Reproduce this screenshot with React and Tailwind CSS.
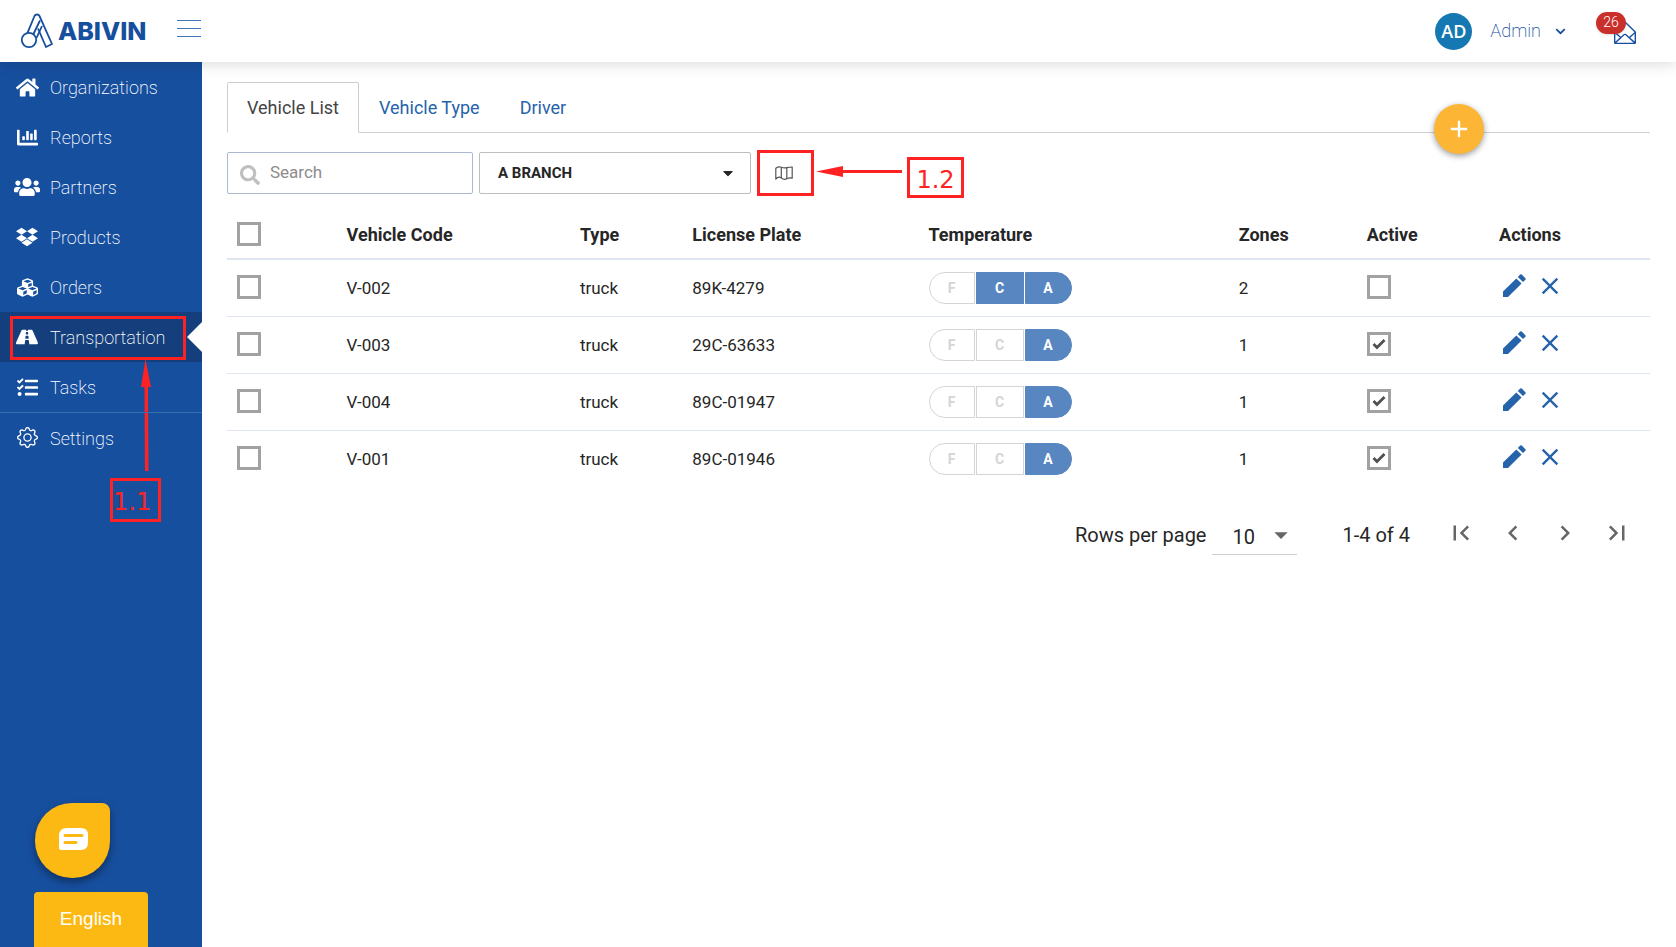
import React, { useState } from 'react';
import {
  FaHome,
  FaChartBar,
  FaUsers,
  FaDropbox,
  FaCubes,
  FaRoad,
  FaTasks,
  FaSearch,
  FaCaretDown,
  FaChevronDown
} from 'react-icons/fa';
import { MdAdd, MdClose, MdFirstPage, MdLastPage, MdChevronLeft, MdChevronRight, MdArrowDropDown } from 'react-icons/md';
import { SlEnvelopeOpen } from 'react-icons/sl';
import { BsGear } from 'react-icons/bs';

const menuItems = [
  { id: 'organizations', label: 'Organizations', icon: FaHome, size: 'h-[23px] w-[23px]' },
  { id: 'reports', label: 'Reports', icon: FaChartBar, size: 'h-[21px] w-[21px]' },
  { id: 'partners', label: 'Partners', icon: FaUsers, size: 'h-[26px] w-[26px]' },
  { id: 'products', label: 'Products', icon: FaDropbox, size: 'h-[22px] w-[22px]' },
  { id: 'orders', label: 'Orders', icon: FaCubes, size: 'h-[21px] w-[21px]' },
  { id: 'transportation', label: 'Transportation', icon: FaRoad, size: 'h-[22px] w-[22px]', callout: true },
  { id: 'tasks', label: 'Tasks', icon: FaTasks, size: 'h-[21px] w-[21px]' },
  { id: 'settings', label: 'Settings', icon: BsGear, size: 'h-[21px] w-[21px]', divider: true }
];

const tabs = ['Vehicle List', 'Vehicle Type', 'Driver'];

const initialVehicles = [
  { code: 'V-002', type: 'truck', plate: '89K-4279', temps: ['C', 'A'], zones: 2, active: false },
  { code: 'V-003', type: 'truck', plate: '29C-63633', temps: ['A'], zones: 1, active: true },
  { code: 'V-004', type: 'truck', plate: '89C-01947', temps: ['A'], zones: 1, active: true },
  { code: 'V-001', type: 'truck', plate: '89C-01946', temps: ['A'], zones: 1, active: true }
];

const Logo = () => (
  <a href="#home" className="flex items-center gap-1 text-[#174f9f]">
    <svg width="34" height="36" viewBox="0 0 34 36" fill="none" stroke="currentColor" strokeWidth="1.8" strokeLinejoin="round">
      <circle cx="9" cy="27" r="7.200" />
      <path d="M7.500 19.800L14.500 3Q15.200 1.500 17 1.500Q18.800 1.500 19.500 3L32 31L26 34L18 15.500" />
      <path d="M13.500 21L20 7.500M22 13L16.500 25" />
    </svg>
    <span className="font-['Inter',sans-serif] text-[25px] leading-none font-extrabold">ABIVIN</span>
  </a>
);

const PencilIcon = () => (
  <svg width="23" height="23" viewBox="0 0 23 23" fill="currentColor">
    <path d="M0 17.600L13.300 4.500L18.600 9.400L5 23H0Z" />
    <path d="M14.800 3L17.200 .6Q18 0 18.800 .6L22.400 4.200Q23 5 22.400 5.800L20 8.100Z" />
  </svg>
);

const MapIcon = () => (
  <svg width="18" height="14" viewBox="0 0 18 14" fill="none" stroke="currentColor" strokeWidth="1.200" strokeLinejoin="round">
    <path d="M.8 2.200Q3.500 .2 6.300 1.200T11.800 1.600T17.200 1V12.200Q14.500 11.400 11.800 12.800T6.300 12T.8 13Z" />
    <path d="M6.300 1.200V12M11.800 1.600V12.800" />
  </svg>
);

const Checkbox = ({ label, checked, onChange }) => (
  <label className="relative block h-6 w-6">
    <input
      type="checkbox"
      aria-label={label}
      checked={checked}
      onChange={onChange}
      className="peer block h-6 w-6 appearance-none border-3 border-[#a2a2a2] bg-white"
    />
    <svg
      viewBox="0 0 14 12"
      fill="none"
      stroke="#505050"
      strokeWidth="2.800"
      className="pointer-events-none absolute inset-0 m-auto hidden h-3 w-3.5 peer-checked:block"
    >
      <path d="M1.500 6L5 9.500L12.500 2" />
    </svg>
  </label>
);

const TemperatureGroup = ({ temps }) => (
  <div className="flex gap-px">
    {['F', 'C', 'A'].map((temp) => (
      <button
        key={temp}
        type="button"
        className={`h-8 w-12 border text-sm font-bold first:w-[46px] first:rounded-l-full last:w-[47px] last:rounded-r-full ${
          temps.includes(temp)
            ? 'border-[#5886c0] bg-[#5886c0] text-white'
            : 'border-[#d5d5d5] bg-white text-[#d5d5d5]'
        }`}
      >
        {temp}
      </button>
    ))}
  </div>
);

const Header = () => (
  <header className="relative z-10 flex h-[62px] shrink-0 items-center bg-white pr-10 pl-5 shadow-[0_2px_14px_rgba(0,0,0,0.15)]">
    <Logo />
    <button type="button" aria-label="Toggle menu" className="mb-1.5 ml-[30px] flex w-6 flex-col gap-[7px]">
      <span className="h-px w-full bg-[#3f74b8]" />
      <span className="h-px w-full bg-[#3f74b8]" />
      <span className="h-px w-full bg-[#3f74b8]" />
    </button>
    <div className="ml-auto flex items-center">
      <span className="flex h-[37px] w-[37px] items-center justify-center rounded-full bg-[#1578b2] font-['Open_Sans',sans-serif] text-lg font-semibold text-white">
        AD
      </span>
      <button type="button" className="ml-[18px] flex items-center gap-3.5 text-lg font-extralight text-[#174f9f]">
        Admin
        <FaChevronDown className="h-[11px] w-[11px]" />
      </button>
      <button type="button" aria-label="Messages" className="relative ml-12 pt-1 text-[#174f9f]">
        <SlEnvelopeOpen className="h-[22px] w-[22px]" />
        <span className="absolute -top-1.5 -left-[18px] flex h-[22px] w-[30px] items-center justify-center rounded-full bg-[#c9302c] pb-0.5 text-sm font-light text-white shadow">
          26
        </span>
      </button>
    </div>
  </header>
);

const Sidebar = () => (
  <aside className="relative flex w-[202px] shrink-0 flex-col bg-[#174f9f]">
    <nav>
      {menuItems.map((item) => (
        <a
          key={item.id}
          href={`#${item.id}`}
          className={`relative flex h-[50px] items-center gap-2.5 pl-3.5 text-lg font-extralight text-white ${
            item.callout ? 'bg-[#143f7c]' : ''
          } ${item.divider ? 'border-t border-[#3a6db0]' : ''}`}
        >
          <span className="flex w-[26px] justify-center">
            <item.icon className={item.size} />
          </span>
          <span className="pt-0.5">{item.label}</span>
          {item.callout && (
            <>
              <span className="absolute top-2.5 right-0 h-0 w-0 border-y-15 border-r-15 border-y-transparent border-r-white" />
              <span className="absolute top-1 right-4 left-2.5 h-11 border-3 border-[#ff2222]" />
              <svg className="absolute top-[47px] left-[140px]" width="12" height="114" viewBox="0 0 12 114" fill="#ff2222">
                <path d="M5.500 0L11 28H8L8.500 112H5L4.500 28H1Z" />
              </svg>
              <span className="absolute top-[166px] left-[110px] flex h-11 w-[51px] items-center border-3 border-[#ff2222] pt-1 font-['DejaVu_Sans',sans-serif] text-2xl font-normal text-[#ff2222]">
                1.1
              </span>
            </>
          )}
        </a>
      ))}
    </nav>
    <div className="mt-auto flex flex-col items-start gap-3.5 pl-[34px]">
      <button
        type="button"
        aria-label="Open chat"
        className="ml-px flex h-[75px] w-[75px] items-center justify-center rounded-[37px] rounded-tr-lg bg-[#fdb913] pb-1 pl-0.5 shadow-[0_4px_8px_rgba(0,0,0,0.4)]"
      >
        <svg width="30" height="22" viewBox="0 0 30 22">
          <path fill="#fff" d="M8 0H22Q29 0 29 7V14Q29 22 22 22H2Q0 22 0 20V8Q0 0 8 0Z" />
          <path stroke="#fdb913" strokeWidth="3" strokeLinecap="round" d="M6 7.500H23M6 14.500H17" />
        </svg>
      </button>
      <button type="button" className="h-[55px] w-[114px] rounded-t bg-[#fdb913] font-['Liberation_Sans',sans-serif] text-[19px] text-white">
        English
      </button>
    </div>
  </aside>
);

const Toolbar = () => (
  <div className="mt-[19px] flex items-center gap-1.5">
    <label className="flex h-[42px] w-[246px] items-center gap-2.5 rounded-xs border border-[#acb7d0] pl-3">
      <FaSearch className="mt-1 h-5 w-5 shrink-0 text-[#bfbfbf]" />
      <input
        type="text"
        aria-label="Search"
        placeholder="Search"
        className="w-full bg-transparent text-[17px] outline-none placeholder:text-[#8c8c8c]"
      />
    </label>
    <div className="relative">
      <select
        aria-label="Branch"
        className="h-[42px] w-[272px] appearance-none rounded-xs border border-[#bdbdbd] bg-white pl-[18px] text-[15px] font-bold"
      >
        <option>A BRANCH</option>
      </select>
      <FaCaretDown className="pointer-events-none absolute top-[13px] right-[15px] h-4 w-4" />
    </div>
    <div className="relative">
      <button
        type="button"
        aria-label="Show map"
        className="-my-1 flex h-[46px] w-[57px] items-center justify-center border-3 border-[#ff2222] pr-1 text-[#555]"
      >
        <MapIcon />
      </button>
      <svg className="absolute top-3 left-[59px]" width="87" height="12" viewBox="0 0 87 12" fill="#ff2222">
        <path d="M0 5.500L27 0V4H86V7H27V11Z" />
      </svg>
      <span className="absolute top-[3px] left-[150px] flex h-[41px] w-[57px] items-center justify-center border-3 border-[#ff2222] pt-1 font-['DejaVu_Sans',sans-serif] text-2xl text-[#ff2222]">
        1.2
      </span>
    </div>
  </div>
);

const VehicleTable = () => {
  const [vehicles, setVehicles] = useState(initialVehicles);
  const [selected, setSelected] = useState([]);

  const toggleSelected = (code) => {
    setSelected(selected.includes(code) ? selected.filter((c) => c !== code) : [...selected, code]);
  };

  const toggleAll = () => {
    setSelected(selected.length === vehicles.length ? [] : vehicles.map((v) => v.code));
  };

  const toggleActive = (code) => {
    setVehicles(vehicles.map((v) => (v.code === code ? { ...v, active: !v.active } : v)));
  };

  return (
    <table className="mt-4 w-full table-fixed text-left text-[17px]">
      <colgroup>
        <col className="w-[8.4%]" />
        <col className="w-[16.4%]" />
        <col className="w-[7.9%]" />
        <col className="w-[16.6%]" />
        <col className="w-[21.8%]" />
        <col className="w-[9%]" />
        <col className="w-[9.3%]" />
        <col />
      </colgroup>
      <thead>
        <tr className="h-[49px] border-b-2 border-[#dfe5ef] text-lg">
          <th className="pl-2.5">
            <Checkbox label="Select all" checked={selected.length === vehicles.length} onChange={toggleAll} />
          </th>
          <th className="pt-0.5">Vehicle Code</th>
          <th className="pt-0.5">Type</th>
          <th className="pt-0.5">License Plate</th>
          <th className="pt-0.5">Temperature</th>
          <th className="pt-0.5">Zones</th>
          <th className="pt-0.5">Active</th>
          <th className="pt-0.5">Actions</th>
        </tr>
      </thead>
      <tbody>
        {vehicles.map((vehicle) => (
          <tr key={vehicle.code} className="h-[57px] border-b border-[#dfe5ef] last:border-0">
            <td className="pb-0.5 pl-2.5">
              <Checkbox
                label={`Select ${vehicle.code}`}
                checked={selected.includes(vehicle.code)}
                onChange={() => toggleSelected(vehicle.code)}
              />
            </td>
            <td className="pt-0.5">{vehicle.code}</td>
            <td className="pt-0.5">{vehicle.type}</td>
            <td className="pt-0.5">{vehicle.plate}</td>
            <td>
              <TemperatureGroup temps={vehicle.temps} />
            </td>
            <td className="pt-0.5">{vehicle.zones}</td>
            <td className="pb-0.5">
              <Checkbox
                label={`${vehicle.code} active`}
                checked={vehicle.active}
                onChange={() => toggleActive(vehicle.code)}
              />
            </td>
            <td>
              <div className="flex items-center gap-2.5 pb-1 pl-1 text-[#2563ab]">
                <button type="button" aria-label={`Edit ${vehicle.code}`}>
                  <PencilIcon />
                </button>
                <button type="button" aria-label={`Delete ${vehicle.code}`}>
                  <MdClose className="h-7 w-7" />
                </button>
              </div>
            </td>
          </tr>
        ))}
      </tbody>
    </table>
  );
};

const Pagination = () => (
  <div className="mt-7 flex items-center justify-end pr-[18px] text-[20px]">
    <label htmlFor="rows-per-page">Rows per page</label>
    <div className="relative ml-1.5">
      <select
        id="rows-per-page"
        className="block h-10 w-[85px] appearance-none border-b border-[#d0d0d0] bg-transparent pt-1 pl-5"
      >
        <option>10</option>
      </select>
      <MdArrowDropDown className="pointer-events-none absolute top-1 right-0 h-8 w-8 text-[#666]" />
    </div>
    <span className="ml-[45px]">1-4 of 4</span>
    <div className="ml-9 flex gap-[22px] pb-1 text-[#666]">
      <button type="button" aria-label="First page"><MdFirstPage className="h-[30px] w-[30px]" /></button>
      <button type="button" aria-label="Previous page"><MdChevronLeft className="h-[30px] w-[30px]" /></button>
      <button type="button" aria-label="Next page"><MdChevronRight className="h-[30px] w-[30px]" /></button>
      <button type="button" aria-label="Last page"><MdLastPage className="h-[30px] w-[30px]" /></button>
    </div>
  </div>
);

const App = () => {
  const [activeTab, setActiveTab] = useState('Vehicle List');

  return (
    <div className="flex min-h-screen flex-col bg-white font-['Roboto',sans-serif] text-[#262626]">
      <Header />
      <div className="flex flex-1">
        <Sidebar />
        <main className="min-w-0 flex-1 pt-5 pr-[26px] pl-[25px]">
          <div className="relative flex h-[51px] border-b border-[#cfcfcf] text-lg">
            {tabs.map((tab) => (
              <button
                key={tab}
                type="button"
                onClick={() => setActiveTab(tab)}
                className={`-mb-px rounded-t-xs border px-[19px] ${
                  activeTab === tab
                    ? 'border-[#cfcfcf] border-b-white bg-white text-[#444]'
                    : 'border-transparent text-[#2563ab]'
                }`}
              >
                {tab}
              </button>
            ))}
            <button
              type="button"
              aria-label="Add vehicle"
              className="absolute top-[22px] right-[166px] flex h-[50px] w-[50px] items-center justify-center rounded-full bg-[#fcb535] text-white shadow-[0_2px_6px_rgba(0,0,0,0.4)]"
            >
              <MdAdd className="h-7 w-7" />
            </button>
          </div>
          <Toolbar />
          <VehicleTable />
          <Pagination />
        </main>
      </div>
    </div>
  );
};

export default App;
